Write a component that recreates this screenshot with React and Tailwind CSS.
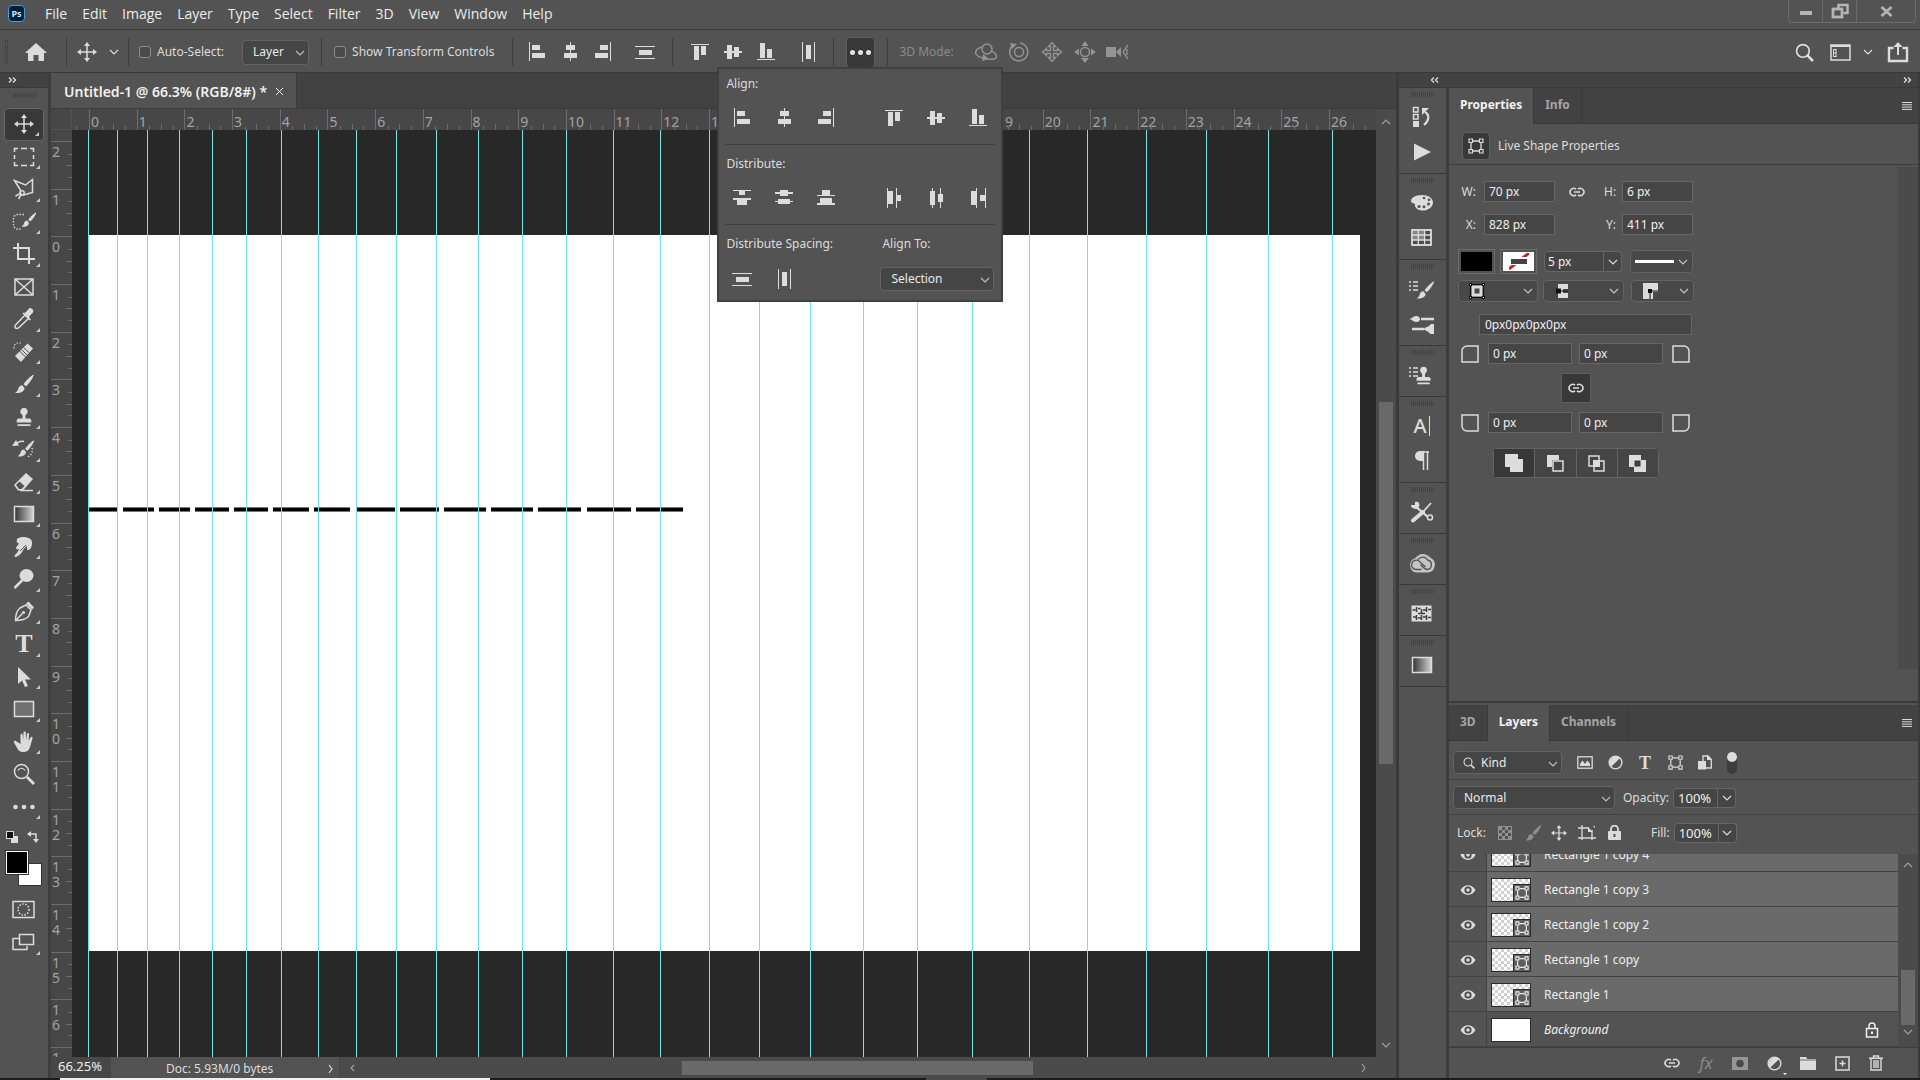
import React from "react";

/* ---------- icon helpers ---------- */

function Svg({ w = 24, h = w, vb, className = "", children }) {
  return (
    <svg
      width={w}
      height={h}
      viewBox={vb || `0 0 ${w} ${h}`}
      fill="none"
      stroke="currentColor"
      strokeWidth="1.5"
      className={"shrink-0 " + className}
      aria-hidden="true"
    >
      {children}
    </svg>
  );
}

function Blocks({ w = 20, h = 20, rects }) {
  return (
    <svg width={w} height={h} viewBox={`0 0 ${w} ${h}`} fill="currentColor" shapeRendering="crispEdges" className="shrink-0" aria-hidden="true">
      {rects.map(([x, y, rw, rh]) => (
        <rect key={`${x}-${y}-${rw}-${rh}`} x={x} y={y} width={rw} height={rh} />
      ))}
    </svg>
  );
}

const ALIGN = {
  left: [[2, 0, 1, 19], [5, 3, 8, 5], [5, 11, 13, 5]],
  hcenter: [[10, 0, 1, 19], [6, 3, 9, 5], [4, 11, 13, 5]],
  right: [[17, 0, 1, 19], [7, 3, 8, 5], [2, 11, 13, 5]],
  top: [[1, 2, 18, 1], [4, 4, 5, 14], [11, 4, 5, 9]],
  vmiddle: [[1, 9, 18, 2], [4, 3, 5, 14], [11, 5, 5, 10]],
  bottom: [[1, 17, 18, 1], [4, 1, 5, 15], [11, 7, 5, 9]],
};
const DIST = {
  top: [[1, 2, 18, 1], [7, 3, 6, 4], [1, 10, 18, 2], [5, 12, 10, 5]],
  vmiddle: [[1, 4, 18, 2], [6, 2, 8, 6], [1, 13, 18, 1], [4, 11, 12, 5]],
  bottom: [[6, 2, 8, 5], [1, 7, 18, 1], [4, 10, 12, 5], [1, 15, 18, 2]],
  left: [[3, 0, 1, 20], [4, 3, 5, 13], [12, 0, 1, 20], [13, 7, 4, 6]],
  hcenter: [[6, 0, 1, 20], [4, 3, 5, 14], [14, 0, 1, 20], [12, 6, 5, 8]],
  right: [[3, 3, 5, 14], [8, 0, 1, 20], [12, 7, 5, 6], [17, 0, 1, 20]],
};
const SPACE = {
  v: [[0, 4, 20, 1], [4, 8, 13, 5], [0, 16, 20, 1]],
  h: [[4, 0, 1, 20], [8, 3, 5, 14], [16, 0, 1, 20]],
};

const Chevron = ({ className = "" }) => (
  <Svg w={10} h={6} className={className}>
    <path d="M1 1l4 4 4-4" strokeWidth="1.2" />
  </Svg>
);

const Move = ({ size = 20 }) => (
  <Svg w={size} vb="0 0 20 20">
    <path d="M10 3v14M3 10h14" />
    <path d="M10 0l3 4H7zM10 20l3-4H7zM0 10l4-3v6zM20 10l-4-3v6z" fill="currentColor" stroke="none" />
  </Svg>
);

const Link = () => (
  <Svg w={18} h={10}>
    <path d="M8 2.2A3.6 3.6 0 1 0 8 7.8M10 2.2A3.6 3.6 0 1 1 10 7.8M6 5h6" strokeWidth="1.6" />
  </Svg>
);

const BrushShape = () => (
  <g fill="currentColor" stroke="none">
    <path d="M21.5 2.5c-4 2.6-7.6 6.2-10 9.6l2.4 2.3c3.3-2.8 6.3-7 8-11.3z" />
    <path d="M10.4 13.2c-2.3 0-3.6 1.3-4.1 3.3-.4 1.700-1.500 3.300-3.300 4.300 3.800.8 8.600-.1 9.700-4.200z" />
  </g>
);

const Brush = ({ size = 24 }) => (
  <Svg w={size} vb="0 0 24 24">
    <BrushShape />
  </Svg>
);

const StampShape = () => (
  <path d="M12 2a4 4 0 0 0-2.300 7.300c.7.600.9 1.700.6 4.200H6a2.500 2.500 0 0 0-2 2.500v2h16v-2a2.500 2.500 0 0 0-2-2.500h-4.300c-.3-2.500-.1-3.600.6-4.200A4 4 0 0 0 12 2zM5 20h14v1.800H5z" fill="currentColor" stroke="none" />
);

const Magnifier = ({ size = 18 }) => (
  <Svg w={size} vb="0 0 18 18">
    <circle cx="7.500" cy="7.500" r="6" strokeWidth="1.600" />
    <path d="M12 12l5 5" strokeWidth="2.500" />
  </Svg>
);

const ShapeBox = ({ size = 16 }) => (
  <Svg w={size} vb="0 0 16 16">
    <path d="M3 5v6M13 5v6M5 3h6M5 13h6" strokeWidth="1.300" />
    <path d="M1 1h3.500v3.500H1zM11.500 1H15v3.500h-3.500zM1 11.500h3.500V15H1zM11.500 11.500H15V15h-3.500z" strokeWidth="1.200" />
  </Svg>
);

const HalfCircle = () => (
  <Svg w={15} vb="0 0 16 16">
    <circle cx="8" cy="8" r="6.800" />
    <path d="M12.900 3.100A7 7 0 0 0 3.100 12.900z" fill="currentColor" stroke="none" />
  </Svg>
);

const Gradient = ({ id }) => (
  <Svg w={22} h={18}>
    <defs>
      <linearGradient id={id}>
        <stop offset="0" stopColor="#333" />
        <stop offset="1" stopColor="#d4d4d4" />
      </linearGradient>
    </defs>
    <rect x="1.500" y="1.500" width="19" height="15" fill={`url(#${id})`} />
  </Svg>
);

/* ---------- tool palette ---------- */

const TOOLS = [
  ["Move", <Move size={20} />],
  ["Rectangular Marquee", <Svg><path d="M2.500 7V3.500H6M9 3.500h6M18 3.500h3.500V7M21.500 10v4M21.500 17v3.500H18M15 20.500H9M6 20.500H2.500V17M2.500 14v-4" /></Svg>],
  ["Polygonal Lasso", <Svg><path d="M9 14L2.500 3.500l11 4.500 7-5.500v13L11.500 18M9.500 16l-6 3M9.500 17l-3 5" /><circle cx="10" cy="16" r="2.200" /></Svg>],
  ["Quick Selection", <Svg><g transform="translate(7 0) scale(.8)"><BrushShape /></g><path d="M12 4.500H5.500a4 4 0 0 0-4 4V15a4 4 0 0 0 4 4h3" strokeDasharray="1.500 1.500" strokeWidth="1.300" /></Svg>],
  ["Crop", <Svg><path d="M1 6h16v16M6 1v16h17" strokeWidth="2" /></Svg>],
  ["Frame", <Svg><path d="M3 4h18v16H3zM3 4l18 16M21 4L3 20" /></Svg>],
  ["Eyedropper", <Svg><path d="M13 8l3.500 3.500L7 20.500c-1 1-2.500 1-3.500.5s-.5-2.500.5-3.500z" /><path d="M12 6l2-1 3-3.500c1.500-1.500 5.500 1.500 4 4L17.500 9l-.5 3.500z" fill="currentColor" stroke="none" /><path d="M11 6l7.500 7" /></Svg>],
  ["Spot Healing Brush", <Svg><path d="M3 16L15.500 3.500l5.500 5L9 22z" fill="currentColor" stroke="none" /><path d="M7.500 11l6 6M11.500 7.500l6 5.500M9.500 9.500l6 6" stroke="#535353" strokeWidth="1" /><path d="M9 3H6a4 4 0 0 0-4 4v3" strokeDasharray="1.500 1.500" strokeWidth="1.200" /></Svg>],
  ["Brush", <Brush size={24} />],
  ["Clone Stamp", <Svg w={22} vb="0 0 24 24"><StampShape /></Svg>],
  ["History Brush", <Svg><g transform="translate(3 1) scale(.88)"><BrushShape /></g><path d="M3 8c3-3.500 6-4 9-3.500" /><path d="M0 9l4-6 3 5.500z" fill="currentColor" stroke="none" /><path d="M20 11c1 4-1 8-5 9" strokeDasharray="1.500 1.500" strokeWidth="1.200" /></Svg>],
  ["Eraser", <Svg><path d="M2 15L14 3l7 6L11 20.500H6z" fill="currentColor" stroke="none" /><path d="M4 15l3.500-3.500 5 4.500-3 3H7z" fill="#535353" stroke="none" /><path d="M8 20.500h13" /></Svg>],
  ["Gradient", <Gradient id="toolGradient" />],
  ["Smudge", <Svg><path d="M5 4c4-3 11-2.500 14 .5 2 3 1 7-1 10l-3 .5 0-4-3 2.500c-2 4-4.500 7.500-8 8.500-1.500.3-2-1-1-2 2-2 3.500-4 4-6-2 1-3 0-3-1.500l3-4C5.500 8 4 7 5 4z" fill="currentColor" stroke="none" /><path d="M14 10l-6 6" stroke="#535353" strokeWidth="1" /></Svg>],
  ["Dodge", <Svg><ellipse cx="14.500" cy="8.500" rx="7" ry="6.500" fill="currentColor" stroke="none" /><path d="M2.500 21L11 12.500" strokeWidth="2.500" /></Svg>],
  ["Pen", <Svg><path d="M3.500 20.500c0-5 1.500-10 4.500-12.500l6-3 5 5-2.500 6.500c-3 3-8 4-13 4zM4 20l6.500-6.500" /><circle cx="11.500" cy="12.500" r="1.600" fill="currentColor" stroke="none" /><path d="M14 3.500l2.500-2 5.500 6-2 2z" fill="currentColor" stroke="none" /></Svg>],
  ["Type", <span className="font-['Liberation_Serif',serif] text-[26px] leading-6 font-bold">T</span>],
  ["Path Selection", <Svg><path d="M6 2l13 12.500h-6l3 6.500-3 1-3-6.500-4 3.500z" fill="currentColor" stroke="none" /></Svg>],
  ["Rectangle", <Svg w={22} h={18}><rect x="1.500" y="1.500" width="19" height="15" fill="#717171" /></Svg>],
  ["Hand", <Svg><path d="M8.500 14V5c0-1.700 2-1.700 2.200 0l.5 5.500.300-8c0-1.500 2.200-1.500 2.300 0l.2 8 1-6.500c.2-1.500 2.200-1.300 2.100.2L16.600 11l1.900-3.500c.8-1.300 2.500-.4 2 1L18 17c-1 3.500-3 5-6.500 5-4 0-5.500-2-7-5L2 12.500c-.6-1.500 1.200-2.300 2.200-1.200z" fill="currentColor" stroke="none" /></Svg>],
  ["Zoom", <Svg><circle cx="9.500" cy="9.500" r="7" /><path d="M15 15l7 7" strokeWidth="2.800" /><path d="M6 8.500c1-2.500 5-3.500 7 0" strokeWidth="1.200" /></Svg>],
  ["Edit Toolbar", <Svg><g fill="currentColor" stroke="none"><circle cx="3.500" cy="12" r="2.300" /><circle cx="12" cy="12" r="2.300" /><circle cx="20.500" cy="12" r="2.300" /></g></Svg>],
];
const NO_FLYOUT = ["Frame", "Zoom"];

const Corner = () => (
  <span className="absolute right-1 bottom-1 size-0 border-b-4 border-l-4 border-b-[#c8c8c8] border-l-transparent" />
);

function Gripper() {
  return (
    <div className="flex h-[5px] justify-center gap-px">
      {Array.from({ length: 12 }, (_, i) => (
        <span key={i} className="w-px bg-[#424242]" />
      ))}
    </div>
  );
}

const DoubleArrow = ({ left }) => (
  <Svg w={9} h={6} className={left ? "rotate-180" : ""}>
    <path d="M1 .5L3.500 3 1 5.500M5 .5L7.500 3 5 5.500" strokeWidth="1.300" />
  </Svg>
);

function Toolbar() {
  return (
    <aside className="flex w-[51px] shrink-0 flex-col border-r-[3px] border-[#3d3d3d] bg-[#535353]">
      <div className="flex h-[15px] shrink-0 items-center border-b border-[#383838] bg-[#424242] pl-2">
        <DoubleArrow />
      </div>
      <div className="pt-[5px]"><Gripper /></div>
      <nav className="mt-2.5 grid h-[715px] auto-rows-fr px-1" aria-label="Tools">
        {TOOLS.map(([name, icon], i) => (
          <button
            key={name}
            type="button"
            aria-label={name}
            className={
              "relative flex w-10 items-center justify-center rounded-sm " +
              (i === 0 ? "border border-[#666] bg-[#383838]" : "")
            }
          >
            {icon}
            {!NO_FLYOUT.includes(name) && <Corner />}
          </button>
        ))}
      </nav>
      <div className="mt-2 flex justify-between pr-[9px] pl-1.5">
        <button type="button" aria-label="Default colors">
          <Svg w={12} h={12}><rect x="5" y="5" width="7" height="7" fill="currentColor" stroke="none" /><rect x=".5" y=".5" width="7" height="7" fill="#111" strokeWidth="1" /></Svg>
        </button>
        <button type="button" aria-label="Swap colors">
          <Svg w={12} h={12}><path d="M3 3h6v6" /><path d="M0 3l4-3v6zM9 12l-3-4h6z" fill="currentColor" stroke="none" /></Svg>
        </button>
      </div>
      <div className="mt-2 ml-1.5 grid w-9 grid-cols-[12px_10px_14px] grid-rows-[12px_11px_12px]">
        <button type="button" aria-label="Background color" className="col-span-2 col-start-2 row-span-2 row-start-2 border border-[#333] bg-white" />
        <button type="button" aria-label="Foreground color" className="col-span-2 col-start-1 row-span-2 row-start-1 border border-white bg-black outline outline-[#333]" />
      </div>
      <button type="button" aria-label="Quick mask" className="mt-3.5 ml-3">
        <Svg w={23} h={19}><rect x="1" y="1.500" width="21" height="16" /><circle cx="11.500" cy="9.500" r="5.500" strokeDasharray="1.500 1.500" /></Svg>
      </button>
      <button type="button" aria-label="Screen mode" className="relative mt-3.5 ml-3 w-8">
        <Svg w={23} h={18}><path d="M7 5.500H1v11h14V13" /><rect x="7.500" y="1.500" width="14" height="10" /></Svg>
        <span className="absolute right-1 -bottom-1 size-0 border-b-4 border-l-4 border-b-[#c8c8c8] border-l-transparent" />
      </button>
    </aside>
  );
}

/* ---------- top bars ---------- */

const MENUS = ["File", "Edit", "Image", "Layer", "Type", "Select", "Filter", "3D", "View", "Window", "Help"];

function MenuBar() {
  return (
    <header className="flex h-[30px] shrink-0 items-start justify-between border-b border-[#383838] bg-[#535353]">
      <div className="flex h-[27px] items-center pl-2">
        <span className="flex size-[17px] items-center justify-center rounded border border-[#31a8e0] bg-[#001e36] text-[9px] leading-none font-bold text-[#c9e8fb]">Ps</span>
        <nav className="ml-5 flex gap-[15px] font-['Open_Sans',sans-serif] text-sm text-[#ececec]" aria-label="Main menu">
          {MENUS.map((m) => (
            <button key={m} type="button">{m}</button>
          ))}
        </nav>
      </div>
      <div className="mr-1 flex h-[23px] rounded-b border border-t-0 border-[#6a6a6a] text-[#b4b4b4]">
        <button type="button" aria-label="Minimize" className="flex w-[34px] items-center justify-center border-r border-[#6a6a6a]">
          <span className="mt-1 h-1 w-3 bg-[#b4b4b4]" />
        </button>
        <button type="button" aria-label="Restore" className="flex w-[34px] items-center justify-center border-r border-[#6a6a6a]">
          <Svg w={18} h={16}><path d="M7.500 5V2h9v8h-4" strokeWidth="2.500" /><rect x="2" y="6" width="9" height="8" strokeWidth="2.800" fill="#535353" /></Svg>
        </button>
        <button type="button" aria-label="Close" className="flex w-[58px] items-center justify-center">
          <Svg w={13} h={11}><path d="M1.500 1l10 9M11.500 1l-10 9" strokeWidth="2.800" /></Svg>
        </button>
      </div>
    </header>
  );
}

const Sep = ({ className = "" }) => <span className={"h-7 w-px shrink-0 bg-[#3d3d3d] " + className} />;

const IconButton = ({ label, className = "w-[33px]", children }) => (
  <button type="button" aria-label={label} className={"flex shrink-0 items-center justify-center " + className}>
    {children}
  </button>
);

function Check({ label, className }) {
  return (
    <label className={"flex shrink-0 items-center gap-1.5 whitespace-nowrap " + className}>
      <input type="checkbox" className="size-3 appearance-none rounded-[3px] border border-[#8c8c8c] bg-[#4a4a4a]" />
      {label}
    </label>
  );
}

function Dropdown({ label, value, className, pad = "pl-2.5" }) {
  return (
    <div className={"relative shrink-0 " + className}>
      <select
        aria-label={label}
        defaultValue={value}
        className={"size-full appearance-none rounded-sm border border-[#636363] bg-[#454545] text-[#eaeaea] " + pad}
      >
        <option>{value}</option>
      </select>
      <Chevron className="pointer-events-none absolute top-1/2 right-1 -mt-0.5 text-[#bdbdbd]" />
    </div>
  );
}

function OptionsBar() {
  return (
    <section className="flex h-[43px] shrink-0 items-center border-b border-[#3a3a3a] bg-[#535353] pt-0.5" aria-label="Options">
      <span className="ml-[5px] h-6 w-[3px] border-x border-dotted border-[#3a3a3a]" />
      <IconButton label="Home" className="mr-[3px] w-[55px]">
        <Svg w={22} h={20}><path d="M11 1L0 11h3v8h5.500v-6h5v6H19v-8h3z" fill="currentColor" stroke="none" /></Svg>
      </IconButton>
      <Sep />
      <IconButton label="Move tool" className="w-10"><Move size={20} /></IconButton>
      <IconButton label="Tool presets" className="w-3.5"><Chevron /></IconButton>
      <Sep className="ml-[7px]" />
      <Check label="Auto-Select:" className="ml-2.5" />
      <Dropdown label="Auto-select target" value="Layer" className="ml-[18px] h-[25px] w-[67px]" />
      <Sep className="ml-3" />
      <Check label="Show Transform Controls" className="ml-3 pr-[18px]" />
      <Sep className="mr-[7px]" />
      <IconButton label="Align left edges"><Blocks rects={ALIGN.left} /></IconButton>
      <IconButton label="Align horizontal centers"><Blocks rects={ALIGN.hcenter} /></IconButton>
      <IconButton label="Align right edges"><Blocks rects={ALIGN.right} /></IconButton>
      <IconButton label="Distribute vertically" className="mx-[9px] w-[33px]"><Blocks rects={SPACE.v} /></IconButton>
      <Sep className="mr-2.5 ml-0.5" />
      <IconButton label="Align top edges"><Blocks rects={ALIGN.top} /></IconButton>
      <IconButton label="Align vertical centers"><Blocks rects={ALIGN.vmiddle} /></IconButton>
      <IconButton label="Align bottom edges"><Blocks rects={ALIGN.bottom} /></IconButton>
      <IconButton label="Distribute horizontally" className="mx-[9px] w-[33px]"><Blocks rects={SPACE.h} /></IconButton>
      <Sep />
      <div className="relative mx-3 shrink-0">
        <button type="button" aria-label="Align and distribute" className="flex h-[31px] w-[29px] items-center justify-center gap-[3px] rounded-sm border border-[#5c5c5c] bg-[#383838]">
          <span className="size-[5px] rounded-full bg-[#e4e4e4]" />
          <span className="size-[5px] rounded-full bg-[#e4e4e4]" />
          <span className="size-[5px] rounded-full bg-[#e4e4e4]" />
        </button>
        <AlignPopup />
      </div>
      <Sep />
      <span className="mr-4 ml-[11px] shrink-0 text-[#8b8b8b]">3D Mode:</span>
      <div className="flex shrink-0 text-[#949494]">
        <IconButton label="Orbit">
          <Svg w={24} h={20}><circle cx="13" cy="7" r="5" /><path d="M8 5C3 6 1 9 2 12c2 4 17 7 20 4 1-2-1-5-4-7" /><path d="M9 12l-1 7 7-2z" fill="currentColor" stroke="none" /></Svg>
        </IconButton>
        <IconButton label="Roll">
          <Svg w={22} h={20}><circle cx="11" cy="10" r="4.500" /><path d="M5 3a9 9 0 1 0 7-2" /><path d="M2 1l7 1-5 5z" fill="currentColor" stroke="none" /></Svg>
        </IconButton>
        <IconButton label="Pan">
          <Svg w={22} h={22}><path d="M11 1.500l3.500 4h-2v4h4v-2l4 3.500-4 3.500v-2h-4v4h2L11 20.500l-3.500-4h2v-4h-4v2L1.500 11l4-3.500v2h4v-4h-2z" strokeWidth="1.400" /></Svg>
        </IconButton>
        <IconButton label="Slide" className="w-8">
          <Svg w={22} h={22}><circle cx="11" cy="11" r="4.500" /><path d="M11 0l3.500 5h-7zM11 22l4-5H7zM0 11l5-3.500v7zM22 11l-5-3.500v7z" fill="currentColor" stroke="none" /></Svg>
        </IconButton>
        <IconButton label="3D camera">
          <Svg w={24} h={16}><path d="M1 3h10v10H1zM11 8l5-5v10z" fill="currentColor" stroke="none" /><path d="M23 1l-5 7 5 7M22 5v6" strokeWidth="1.300" /></Svg>
        </IconButton>
      </div>
      <div className="mr-1.5 ml-auto flex shrink-0 items-center">
        <IconButton label="Search" className="mr-[3px] w-[33px]"><Magnifier size={19} /></IconButton>
        <IconButton label="Workspace">
          <Svg w={21} h={17}><rect x="1" y="1" width="19" height="15" /><path d="M1 2h19" strokeWidth="2" /><path d="M3.500 5v8M6 5v8M3 5.500h3.500M3 9h3.500M3 12.500h3.500" strokeWidth="1" /></Svg>
        </IconButton>
        <IconButton label="Workspace menu" className="mr-[5px] ml-[3px] w-4"><Chevron /></IconButton>
        <IconButton label="Share">
          <Svg w={22} h={21}><path d="M6.500 6H2v13h18V6h-4.500" strokeWidth="2.400" /><path d="M11 13V3" strokeWidth="2" /><path d="M6.500 5L11 0l4.500 5z" fill="currentColor" stroke="none" /></Svg>
        </IconButton>
      </div>
    </section>
  );
}

function PopupRow({ labels, icons }) {
  return (
    <div className="-ml-1 grid grid-cols-[42px_42px_42px_26px_42px_42px_42px]">
      {icons.map((rects, i) => (
        <button key={labels[i]} type="button" aria-label={labels[i]} className={"flex h-6 items-center justify-center " + (i === 3 ? "col-start-5" : "")}>
          <Blocks rects={rects} />
        </button>
      ))}
    </div>
  );
}

function AlignPopup() {
  return (
    <div className="absolute top-[30px] right-[-128px] z-10 w-[286px] border-2 border-[#404040] bg-[#535353] px-[7px] pt-[7px] pb-[9px]">
      <h2 className="leading-4">Align:</h2>
      <div className="-mx-px mt-3.5 border-b border-[#3d3d3d] pb-3.5">
        <PopupRow labels={["Left edges", "Horizontal centers", "Right edges", "Top edges", "Vertical centers", "Bottom edges"]} icons={[ALIGN.left, ALIGN.hcenter, ALIGN.right, ALIGN.top, ALIGN.vmiddle, ALIGN.bottom]} />
      </div>
      <h2 className="mt-[11px] leading-4">Distribute:</h2>
      <div className="-mx-px mt-3.5 border-b border-[#3d3d3d] pb-3.5">
        <PopupRow labels={["Distribute top", "Distribute middles", "Distribute bottom", "Distribute left", "Distribute centers", "Distribute right"]} icons={[DIST.top, DIST.vmiddle, DIST.bottom, DIST.left, DIST.hcenter, DIST.right]} />
      </div>
      <div className="mt-[11px] grid grid-cols-[154px_1fr] leading-4">
        <h2>Distribute Spacing:</h2>
        <h2 className="px-0.5">Align To:</h2>
        <div className="mt-[15px] -ml-[5px] flex">
          <IconButton label="Space vertically" className="w-[42px]"><Blocks rects={SPACE.v} /></IconButton>
          <IconButton label="Space horizontally" className="w-[42px]"><Blocks rects={SPACE.h} /></IconButton>
        </div>
        <Dropdown label="Align to" value="Selection" className="mt-[15px] h-6" />
      </div>
    </div>
  );
}

/* ---------- document window ---------- */

const INCH = 47.7;

function HorizontalRuler() {
  return (
    <div className="flex h-[21px] shrink-0 bg-[#474747] text-sm leading-none text-[#a3a3a3]">
      <div className="w-[21px] shrink-0 border-r border-b border-dotted border-[#5e5e5e]" />
      <div className="flex w-0 flex-1 overflow-hidden">
        <div className="flex w-[17px] shrink-0 items-end pl-1"><i className="h-1 w-px bg-[#6c6c6c]" /></div>
        {Array.from({ length: 27 }, (_, n) => (
          <div key={n} className="grid shrink-0 grid-cols-4 grid-rows-1 items-end border-l border-[#6c6c6c]" style={{ width: INCH }}>
            <span className="col-start-1 row-start-1 self-center pt-1 pl-px">{n}</span>
            <i className="col-start-2 row-start-1 h-1 w-px bg-[#6c6c6c]" />
            <i className="col-start-3 row-start-1 h-1.5 w-px bg-[#6c6c6c]" />
            <i className="col-start-4 row-start-1 h-1 w-px bg-[#6c6c6c]" />
          </div>
        ))}
      </div>
    </div>
  );
}

function VerticalRuler() {
  const labels = [2, 1, ...Array.from({ length: 18 }, (_, n) => n)];
  return (
    <div className="w-[21px] shrink-0 overflow-hidden bg-[#474747] pt-[11px] text-sm leading-[15px] text-[#a3a3a3]">
      {labels.map((n, i) => (
        <div key={i} className="grid grid-cols-1 grid-rows-4 border-t border-[#6c6c6c]" style={{ height: INCH }}>
          <span className="col-start-1 row-span-4 row-start-1 flex flex-col pt-0.5 pl-px">
            {String(n).split("").map((d, k) => <span key={k}>{d}</span>)}
          </span>
          <i className="col-start-1 row-start-2 h-px w-1 justify-self-end bg-[#6c6c6c]" />
          <i className="col-start-1 row-start-3 h-px w-1.5 justify-self-end bg-[#6c6c6c]" />
          <i className="col-start-1 row-start-4 h-px w-1 justify-self-end bg-[#6c6c6c]" />
        </div>
      ))}
    </div>
  );
}

const GUIDES = [16, 45, 75, 107, 140, 174, 209, 246, 284, 324, 364, 406, 450, 494, 541, 588, 637, 687, 738, 791, 845, 900, 957, 1015, 1074, 1134, 1196, 1260];
const DASHES = [[17, 28], [51, 31], [87, 31], [123, 34], [162, 34], [201, 36], [242, 36], [285, 38], [328, 39], [372, 42], [419, 42], [466, 43], [515, 44], [564, 47]];

function Canvas() {
  return (
    <main className="relative flex-1 overflow-hidden bg-[#282828]" aria-label="Canvas">
      <div className="absolute top-[105px] left-[17px] h-[716px] w-[1271px] bg-white" />
      {DASHES.map(([x, w]) => (
        <span key={x} className="absolute top-[377px] h-[5px] border-y border-[#777] bg-black" style={{ left: x, width: w }} />
      ))}
      {GUIDES.map((x) => (
        <span key={x} className="absolute inset-y-0 w-px bg-[#6fe6e6]" style={{ left: x }} />
      ))}
    </main>
  );
}

function DocumentArea() {
  return (
    <div className="flex min-w-0 flex-1 flex-col">
      <div className="flex h-9 shrink-0 border-b border-[#3a3a3a] bg-[#424242]">
        <div className="flex items-center gap-2 border-r border-[#3a3a3a] bg-[#535353] pt-0.5 pr-3 pl-[13px] text-sm font-semibold text-[#f0f0f0]">
          Untitled-1 @ 66.3% (RGB/8#) *
          <button type="button" aria-label="Close document"><Svg w={9} h={9}><path d="M1 1l7 7M8 1L1 8" strokeWidth="1" /></Svg></button>
        </div>
      </div>
      <div className="flex min-h-0 flex-1">
        <div className="flex min-w-0 flex-1 flex-col">
          <HorizontalRuler />
          <div className="flex min-h-0 flex-1">
            <VerticalRuler />
            <Canvas />
          </div>
          <div className="flex h-[21px] shrink-0 items-stretch bg-[#4b4b4b]">
            <label className="flex w-[60px] bg-[#474747]">
              <input aria-label="Zoom level" defaultValue="66.25%" className="w-full pb-0.5 pl-[7px] text-[13px] text-[#efefef]" />
            </label>
            <div className="flex w-[229px] items-center justify-between border-r border-[#454545] bg-[#535353] pt-0.5 pr-1.5 pl-[55px]">
              <span>Doc: 5.93M/0 bytes</span>
              <button type="button" aria-label="Status menu"><Svg w={5} h={10}><path d="M1 1l3 4-3 4" strokeWidth="1.200" /></Svg></button>
            </div>
            <div className="flex flex-1 items-center px-2.5 text-[#a0a0a0]">
              <Svg w={5} h={8}><path d="M4 1L1 4l3 3" strokeWidth="1.200" /></Svg>
              <div className="flex flex-1 pr-6 pl-8">
                <div className="ml-[31%] h-3.5 w-[37%] bg-[#6a6a6a]" />
              </div>
              <Svg w={5} h={10}><path d="M1 1l3 4-3 4" strokeWidth="1.200" /></Svg>
            </div>
          </div>
        </div>
        <div className="flex w-5 shrink-0 flex-col items-center bg-[#4b4b4b] pt-2.5 pb-[30px] text-[#a0a0a0]">
          <Chevron className="rotate-180" />
          <div className="flex w-3.5 flex-1 flex-col pt-[277px]">
            <div className="h-[362px] bg-[#6a6a6a]" />
          </div>
          <Chevron />
        </div>
      </div>
    </div>
  );
}

/* ---------- dock of collapsed panels ---------- */

const ListLines = () => <path d="M0 4h2M4 4h5M0 8h2M4 8h5M0 12h2M4 12h5" strokeWidth="1.500" />;

const DOCK = [
  [
    ["History", <Svg w={20} h={22}><rect x="1.500" y="1.500" width="4.500" height="4.500" /><rect x="1.500" y="8.500" width="4.500" height="4.500" /><rect x="1" y="15" width="6" height="6" fill="currentColor" stroke="none" /><path d="M13 6c5 3 4 9-1 13" strokeWidth="2.200" /><path d="M10 9V2h7z" fill="currentColor" stroke="none" /></Svg>],
    ["Actions", <Svg w={18} h={18}><path d="M1 .5L18 9 1 17.500z" fill="currentColor" stroke="none" /></Svg>],
  ],
  [
    ["Color", <Svg w={24} h={18}><path d="M12 1C5 1 1 4 1 7c0 2 3 2 4 3-1 4 4 7 9 6.500 5-.5 9-4 9-8C23 4 18 1 12 1z" fill="currentColor" stroke="none" /><g fill="#535353" stroke="none"><circle cx="9" cy="12.500" r="1.600" /><circle cx="14" cy="12.800" r="1.500" /><circle cx="18.500" cy="10" r="1.500" /><circle cx="19" cy="5.800" r="1.400" /><circle cx="14" cy="4" r="1.300" /></g></Svg>],
    ["Swatches", <Svg w={21} h={17}><rect x="1" y="1" width="19" height="15" fill="#4b4b4b" /><path d="M1 1h13v10H1z" fill="#858585" stroke="none" /><path d="M7.300 1v15M13.600 1v15M1 6h19M1 11h19M1 1h19v15H1z" strokeWidth="1.300" /></Svg>],
  ],
  [
    ["Brush Settings", <Svg w={26} h={22}><ListLines /><g transform="translate(5 1) scale(.92)"><BrushShape /></g></Svg>],
    ["Brushes", <Svg w={26} h={20}><path d="M12 5h13M3 15h12" strokeWidth="2.400" /><path d="M0 5c3 0 4-3 7-3 3 0 4 2 4 3s-1 3-4 3C4 8 3 5 0 5zM15 15c0-2 4-1 7-5h3v11h-3c-3-5-7-4-7-6z" fill="currentColor" stroke="none" /></Svg>],
  ],
  [["Clone Source", <Svg w={26} h={22}><ListLines /><g transform="translate(4 1) scale(.88)"><StampShape /></g></Svg>]],
  [
    ["Character", <span className="flex items-center gap-0.5 text-xl leading-5 font-medium">A<i className="h-5 w-px bg-[#dcdcdc]" /></span>],
    ["Paragraph", <Svg w={16} h={19}><path d="M9 0H6a5 5 0 0 0 0 10h3z" fill="currentColor" stroke="none" /><path d="M9.500 0v19M13.500 0v19M8 1h7" strokeWidth="1.500" /></Svg>],
  ],
  [["Tool Presets", <Svg w={24} h={22}><path d="M3 19.500L13 11" strokeWidth="4" strokeLinecap="round" /><path d="M12 12l9-10" strokeWidth="1.800" /><path d="M5 5l13 11" strokeWidth="2.200" /><circle cx="20" cy="16.500" r="2.500" /><path d="M1 4l4 0V1c4-1 5 2 4 5L7 8C4 8 1 7 1 4z" fill="currentColor" stroke="none" /></Svg>]],
  [["Libraries", <Svg w={27} h={20} className="text-[#c4c4c4]"><path d="M8 19.500A7.500 7.500 0 0 1 7.500 5 9 9 0 0 1 22 4.500a7.800 7.800 0 0 1-2.500 15z" fill="currentColor" stroke="none" /><path d="M13.500 16.500H8.500a4.700 4.700 0 1 1 2.500-8.500l6.500 6M10 6.500c3-3.500 8-3 9.500.5a4.800 4.800 0 0 1-.5 9.500c-2.500 0-4-2.500-6.500-5" stroke="#535353" strokeWidth="1.300" /></Svg>]],
  [["Patterns", <Svg w={21} h={17}><rect x=".5" y=".5" width="20" height="16" fill="currentColor" stroke="none" /><path d="M5.500 2v5M10.500 4v4M15.500 2v5M1.500 5h3M7 3.500h2.500M12 5h3M17 4.500h3M5.500 10v5M10.500 10v5M15.500 10v5M2 12h3M7 8.500h7M7 13h3M12 12h3M17 12.500h3" stroke="#3d3d3d" strokeWidth="1.500" /></Svg>]],
  [["Gradients", <Gradient id="dockGradient" />]],
];

function Dock() {
  return (
    <aside className="flex w-[50px] shrink-0 flex-col border-r-[3px] border-[#3d3d3d] bg-[#535353]">
      {DOCK.map((group, i) => (
        <div key={i} className="border-b border-[#3a3a3a] pt-1 pb-1">
          <Gripper />
          <div className="mt-0.5">
            {group.map(([name, icon]) => (
              <button key={name} type="button" aria-label={name} className="flex h-[35px] w-full items-center justify-center pr-0.5">
                {icon}
              </button>
            ))}
          </div>
        </div>
      ))}
    </aside>
  );
}

/* ---------- right panels ---------- */

function Tabs({ tabs, active }) {
  return (
    <div className="flex h-9 shrink-0 items-stretch bg-[#424242]" role="tablist">
      {tabs.map((t) => (
        <button
          key={t}
          type="button"
          role="tab"
          aria-selected={t === active}
          className={
            "border-r border-[#3a3a3a] px-[11px] pb-0.5 font-bold " +
            (t === active ? "bg-[#535353] text-[#f2f2f2]" : "border-b text-[#a6a6a6]")
          }
        >
          {t}
        </button>
      ))}
      <div className="flex flex-1 items-center justify-end border-b border-[#3a3a3a] pr-1.5">
        <button type="button" aria-label="Panel menu">
          <Svg w={10} h={8}><path d="M0 .5h10M0 2.800h10M0 5.100h10M0 7.400h10" strokeWidth="1" /></Svg>
        </button>
      </div>
    </div>
  );
}

function Field({ label, id, value, labelClass, className = "w-[71px]" }) {
  return (
    <>
      {labelClass && <label htmlFor={id} className={"text-right " + labelClass}>{label}</label>}
      <input
        id={id}
        aria-label={label}
        defaultValue={value}
        className={"h-[21px] border border-[#666] bg-[#454545] pl-1 text-[#efefef] " + className}
      />
    </>
  );
}

function CornerIcon({ d }) {
  return <Svg w={18} h={18}><path d={d} /></Svg>;
}

function IconSelect({ label, className, icon }) {
  return (
    <div className={"relative flex items-center rounded-sm border border-[#636363] bg-[#484848] " + className}>
      <select aria-label={label} className="absolute inset-0 appearance-none opacity-0"><option>{label}</option></select>
      {icon}
      <Chevron className="mr-1 ml-auto text-[#c4c4c4]" />
    </div>
  );
}

const BOOLEANS = [
  ["Combine shapes", <Svg w={18} h={18}><path d="M0 0h13v5h5v13H5v-5H0z" fill="currentColor" stroke="none" /></Svg>],
  ["Subtract front shape", <Svg w={17} h={17}><path d="M0 0h12v5H5v7H0z" fill="currentColor" stroke="none" /><rect x="6" y="6" width="10" height="10" /></Svg>],
  ["Intersect shapes", <Svg w={17} h={17}><rect x="1" y="1" width="10" height="10" /><rect x="6" y="6" width="10" height="10" /><path d="M5 5h7v7H5z" fill="currentColor" stroke="none" /></Svg>],
  ["Exclude overlapping", <Svg w={17} h={17}><path d="M0 0h12v5h5v12H5v-5H0z" fill="currentColor" stroke="none" /><path d="M5.500 5.500h6v6h-6z" fill="#3f3f3f" stroke="none" /></Svg>],
];

function Properties() {
  return (
    <section className="flex min-h-0 flex-1 flex-col border-b-2 border-[#3a3a3a]" aria-label="Properties panel">
      <Tabs tabs={["Properties", "Info"]} active="Properties" />
      <div className="flex h-[41px] shrink-0 items-center gap-2 border-b border-[#3d3d3d] pt-[3px] pl-[13px]">
        <span className="flex size-7 items-center justify-center rounded-sm border border-[#606060] bg-[#383838]"><ShapeBox /></span>
        Live Shape Properties
      </div>
      <div className="flex min-h-0 flex-1">
        <div className="w-[260px] pt-4 pl-[9px]">
          <div className="flex items-center">
            <Field id="w" label="W:" value="70 px" labelClass="w-[18px] mr-2" />
            <IconButton label="Link width and height" className="mr-[5px] w-11"><Link /></IconButton>
            <Field id="h" label="H:" value="6 px" labelClass="w-3 mr-1.5" />
          </div>
          <div className="mt-3 flex items-center">
            <Field id="x" label="X:" value="828 px" labelClass="w-[18px] mr-2" />
            <span className="w-[49px]" />
            <Field id="y" label="Y:" value="411 px" labelClass="w-3 mr-1.5" />
          </div>
          <div className="mt-3.5 flex h-[25px] items-center">
            <button type="button" aria-label="Fill" className="h-[25px] w-[37px] border border-[#6b6b6b] p-0.5"><span className="block h-full bg-black" /></button>
            <button type="button" aria-label="Stroke" className="ml-[5px] h-[25px] w-[37px] border border-[#6b6b6b] p-0.5">
              <span className="flex h-full items-center justify-center bg-white">
                <Svg w={20} h={17}><path d="M0 16l20-16" stroke="#c62828" strokeWidth="3" /><rect x="0" y="4" width="20" height="8" fill="#fff" stroke="none" /><rect x="2" y="6" width="16" height="5" fill="#444" stroke="none" /></Svg>
              </span>
            </button>
            <input aria-label="Stroke width" defaultValue="5 px" className="ml-[7px] h-[21px] w-[60px] rounded-l-sm border border-[#666] bg-[#454545] pl-[3px] text-[#efefef]" />
            <button type="button" aria-label="Stroke width presets" className="flex h-[21px] w-[18px] items-center justify-center rounded-r-sm border border-l-0 border-[#666] bg-[#454545]"><Chevron /></button>
            <IconSelect label="Stroke style" className="ml-2 h-[23px] w-[63px] pl-1" icon={<span className="h-[3px] w-[39px] bg-white" />} />
          </div>
          <div className="mt-1.5 flex">
            <IconSelect label="Stroke alignment" className="h-[22px] w-20 pl-2.5" icon={<Svg w={16} h={16}><rect x="4" y="4" width="8" height="8" strokeWidth="3" /><path d="M1.500 1.500h13v13h-13z" stroke="#111" strokeWidth="1.200" /><path d="M0 0h3v3H0zM13 0h3v3h-3zM0 13h3v3H0zM13 13h3v3h-3z" stroke="none" fill="#111" /><path d="M1 1h1v1H1zM14 1h1v1h-1zM1 14h1v1H1zM14 14h1v1h-1z" stroke="none" fill="#fff" /></Svg>} />
            <IconSelect label="Stroke caps" className="ml-[5px] h-[22px] w-[81px] pl-3" icon={<Svg w={12} h={16}><path d="M2 1h10v5H7v4h5v5H2z" fill="currentColor" stroke="none" /><path d="M0 5.500h5v5H0z" fill="#111" stroke="none" /><path d="M5 8h7" stroke="#111" strokeWidth="1" /></Svg>} />
            <IconSelect label="Stroke corners" className="ml-[7px] h-[22px] w-[63px] pl-2.5" icon={<Svg w={17} h={16}><path d="M1 0h15v9h-5v7H1z" fill="currentColor" stroke="none" /><path d="M6 6h4v4H6z" fill="#111" stroke="none" /><path d="M8 8h8M8 8v8" stroke="#111" strokeWidth="1" /></Svg>} />
          </div>
          <input aria-label="Corner radii" defaultValue="0px0px0px0px" className="mt-3 ml-[21px] h-[21px] w-[213px] border border-[#666] bg-[#454545] pl-[5px] text-[#efefef]" />
          <div className="mt-2 grid w-[235px] grid-cols-[18px_84px_84px_18px] items-center gap-x-[7px] gap-y-[9px] pl-[3px]">
            <CornerIcon d="M1 17V6a5 5 0 0 1 5-5h11v16z" />
            <Field id="tl" label="Top left radius" value="0 px" className="ml-0.5 w-full" />
            <Field id="tr" label="Top right radius" value="0 px" className="ml-0.5 w-full" />
            <span className="pl-1"><CornerIcon d="M1 17V1h11a5 5 0 0 1 5 5v11z" /></span>
            <button type="button" aria-label="Link radii" className="col-span-4 ml-[100px] flex h-[30px] w-[30px] items-center justify-center border border-[#5e5e5e] bg-[#383838]"><Link /></button>
            <CornerIcon d="M1 1h16v16H6a5 5 0 0 1-5-5z" />
            <Field id="bl" label="Bottom left radius" value="0 px" className="ml-0.5 w-full" />
            <Field id="br" label="Bottom right radius" value="0 px" className="ml-0.5 w-full" />
            <span className="pl-1"><CornerIcon d="M1 1h16v11a5 5 0 0 1-5 5H1z" /></span>
          </div>
          <div className="mt-[15px] ml-[35px] flex w-[166px] divide-x divide-[#636363] rounded-sm border border-[#636363]">
            {BOOLEANS.map(([name, icon], i) => (
              <button key={name} type="button" aria-label={name} className={"flex h-7 flex-1 items-center justify-center " + (i === 0 ? "bg-[#383838]" : "bg-[#454545]")}>
                {icon}
              </button>
            ))}
          </div>
        </div>
        <div className="mt-0.5 mb-8 ml-auto w-5 bg-[#4b4b4b]" />
      </div>
    </section>
  );
}

const Eye = () => (
  <Svg w={16} h={12}>
    <path d="M.5 6C4-.5 12-.5 15.500 6 12 12.500 4 12.500.5 6z" fill="currentColor" stroke="none" />
    <circle cx="8" cy="6" r="3.600" fill="#4a4a4a" stroke="none" />
    <circle cx="8" cy="6" r="1.800" fill="currentColor" stroke="none" />
  </Svg>
);

const CHECKER = "bg-white bg-[repeating-conic-gradient(#d0d0d0_0_25%,#fff_0_50%)] bg-[size:6px_6px]";

const LAYERS = ["Rectangle 1 copy 4", "Rectangle 1 copy 3", "Rectangle 1 copy 2", "Rectangle 1 copy", "Rectangle 1"];

function LayerRow({ name, background }) {
  return (
    <li className="flex h-[35px] shrink-0 border-b border-[#434343]">
      <button type="button" aria-label={"Toggle " + name} className="flex w-[38px] items-center justify-center border-r border-[#434343] pt-px"><Eye /></button>
      <div className={"flex flex-1 items-center pt-px pl-1 text-[#efefef] " + (background ? "" : "bg-[#6a6a6a]")}>
        <span className={"flex h-6 w-10 items-end justify-end border border-[#2b2b2b] " + (background ? "bg-white" : CHECKER)}>
          {!background && (
            <span className="flex size-[17px] items-center justify-center border-t border-l border-[#2b2b2b] bg-[#5e5e5e]"><ShapeBox size={14} /></span>
          )}
        </span>
        <span className={"ml-[13px] " + (background ? "italic" : "")}>{name}</span>
        {background && (
          <Svg w={14} h={16} className="mr-[19px] ml-auto"><rect x="1.500" y="6.500" width="11" height="8.500" /><path d="M4 6V4a3 3 0 0 1 6 0v2" /><rect x="6" y="9.500" width="2" height="2.500" fill="currentColor" stroke="none" /></Svg>
        )}
      </div>
    </li>
  );
}

function Percent({ id, label }) {
  return (
    <div className="flex items-center gap-1">
      <label htmlFor={id}>{label}</label>
      <span className="flex">
        <input id={id} defaultValue="100%" className="h-5 w-[45px] rounded-l-sm border border-[#666] bg-[#454545] pl-1 text-[13px] text-[#efefef]" />
        <button type="button" aria-label={label + " slider"} className="flex h-5 w-[18px] items-center justify-center rounded-r-sm border border-l-0 border-[#666] bg-[#454545]"><Chevron /></button>
      </span>
    </div>
  );
}

const SerifT = () => <span className="font-['Liberation_Serif',serif] text-lg leading-4 font-bold">T</span>;

function Layers() {
  return (
    <section className="flex flex-col pt-0.5" aria-label="Layers panel">
      <Tabs tabs={["3D", "Layers", "Channels"]} active="Layers" />
      <div className="flex h-[39px] shrink-0 items-center border-b border-[#434343] pt-[5px] pl-1">
        <div className="relative">
          <Dropdown label="Filter kind" value="Kind" className="h-[23px] w-[109px]" pad="pl-[27px]" />
          <span className="pointer-events-none absolute top-1.5 left-2.5"><Magnifier size={12} /></span>
        </div>
        <div className="ml-2 flex">
          <IconButton label="Pixel layers" className="w-[30px]"><Svg w={16} h={13}><rect x=".8" y=".8" width="14.400" height="11.400" strokeWidth="1.300" /><path d="M3 10V8l2.500-3.500L8 8l2.500-3.500L13 8v2z" fill="currentColor" stroke="none" /></Svg></IconButton>
          <IconButton label="Adjustment layers" className="w-[30px]"><HalfCircle /></IconButton>
          <IconButton label="Type layers" className="w-[30px]"><SerifT /></IconButton>
          <IconButton label="Shape layers" className="w-[30px]"><ShapeBox size={15} /></IconButton>
          <IconButton label="Smart objects" className="w-[30px]"><Svg w={14} h={15}><path d="M5 7V1h5l3.300 3.500V13H8" strokeWidth="1.300" /><path d="M0 6h8v8.500H0zM9 0l5 5H9z" fill="currentColor" stroke="none" /></Svg></IconButton>
        </div>
        <button type="button" aria-label="Filter toggle" className="ml-[7px] flex h-[22px] w-2.5 items-start justify-center rounded-full bg-[#3d3d3d]"><span className="size-2.5 shrink-0 rounded-full bg-[#dcdcdc]" /></button>
      </div>
      <div className="flex h-[35px] shrink-0 items-center gap-2 border-b border-[#434343] pt-px pl-1">
        <Dropdown label="Blend mode" value="Normal" className="h-[23px] w-[162px]" />
        <Percent id="opacity" label="Opacity:" />
      </div>
      <div className="flex h-[39px] shrink-0 items-center pb-1 pl-2">
        <span>Lock:</span>
        <div className="ml-[5px] flex">
          <IconButton label="Lock transparent pixels" className="w-7 text-[#909090]"><Svg w={14} h={14}><path d="M0 0h14v14H0z" fill="currentColor" stroke="none" /><path d="M1 4h3v3H1zM7 4h3v3H7zM4 1h3v3H4zM10 1h3v3h-3zM4 7h3v3H4zM10 7h3v3h-3zM1 10h3v3H1zM7 10h3v3H7z" fill="#535353" stroke="none" /></Svg></IconButton>
          <IconButton label="Lock image pixels" className="w-7 text-[#909090]"><Brush size={20} /></IconButton>
          <IconButton label="Lock position" className="w-6"><Move size={16} /></IconButton>
          <IconButton label="Lock artboard nesting" className="w-8"><Svg w={18} h={15}><path d="M4 0v15M0 3h11M0 13h18M14 5v10" strokeWidth="1.300" /><path d="M10 2l5 5h-5zM15 1l2 0v2z" fill="currentColor" stroke="none" /></Svg></IconButton>
          <IconButton label="Lock all" className="w-6"><Svg w={13} h={15}><rect y="6" width="13" height="9" rx="1" fill="currentColor" stroke="none" /><path d="M3 7V4a3.500 3.500 0 0 1 7 0v3" strokeWidth="1.800" /><rect x="5.500" y="9" width="2" height="3" fill="#535353" stroke="none" /></Svg></IconButton>
        </div>
        <div className="ml-6"><Percent id="fill" label="Fill:" /></div>
      </div>
      <div className="flex h-[194px] shrink-0 border-b border-[#3d3d3d]">
        <ul className="flex flex-1 flex-col justify-end overflow-hidden">
          {LAYERS.map((name) => <LayerRow key={name} name={name} />)}
          <LayerRow name="Background" background />
        </ul>
        <div className="flex w-5 shrink-0 flex-col items-center bg-[#4b4b4b] pt-2 pb-3 text-[#a0a0a0]">
          <Chevron className="rotate-180" />
          <div className="mt-auto mb-1 h-[55px] w-3.5 bg-[#6a6a6a]" />
          <Chevron />
        </div>
      </div>
      <div className="flex h-[30px] shrink-0 items-center justify-end pr-[25px]">
        <IconButton label="Link layers" className="w-[34px]"><Link /></IconButton>
        <IconButton label="Layer style" className="w-[34px] text-[#8c8c8c]"><span className="text-base leading-none italic">fx</span></IconButton>
        <IconButton label="Layer mask" className="w-[34px] text-[#969696]"><Svg w={16} h={13}><path d="M0 0h16v13H0z" fill="currentColor" stroke="none" /><circle cx="8" cy="6.500" r="3.800" fill="#4a4a4a" stroke="none" /></Svg></IconButton>
        <IconButton label="Adjustment layer" className="relative w-[34px]"><HalfCircle /><span className="absolute right-1 -bottom-1 border-x-2 border-t-2 border-x-transparent border-t-white" /></IconButton>
        <IconButton label="Group" className="w-[34px]"><Svg w={16} h={13}><path d="M0 0h6l1.500 2H16v11H0z" fill="currentColor" stroke="none" /><path d="M0 3h16" stroke="#535353" strokeWidth=".8" /></Svg></IconButton>
        <IconButton label="New layer" className="w-[34px]"><Svg w={15} h={15}><path d="M1 1h13v13H1zM7.500 4.500v6M4.500 7.500h6" /></Svg></IconButton>
        <IconButton label="Delete layer" className="w-[34px]"><Svg w={14} h={16}><path d="M2 4v11h10V4M0 3.200h14M4.500 3V1h5v2M5 5v8M7 5v8M9 5v8" strokeWidth="1.400" /></Svg></IconButton>
      </div>
    </section>
  );
}

export default function App() {
  return (
    <div className="flex h-screen flex-col overflow-hidden bg-[#535353] font-['Noto_Sans',sans-serif] text-xs text-[#dcdcdc]">
      <MenuBar />
      <OptionsBar />
      <div className="flex min-h-0 flex-1">
        <Toolbar />
        <DocumentArea />
        <div className="flex w-[524px] shrink-0 flex-col border-r-2 border-l-[3px] border-[#3a3a3a]">
          <div className="flex h-[15px] shrink-0 items-center justify-between border-b border-[#383838] bg-[#424242] pr-1.5 pl-[31px]">
            <DoubleArrow left />
            <DoubleArrow />
          </div>
          <div className="flex min-h-0 flex-1">
            <Dock />
            <div className="flex min-w-0 flex-1 flex-col bg-[#535353]">
              <Properties />
              <Layers />
            </div>
          </div>
        </div>
      </div>
      <footer className="flex h-0.5 shrink-0 bg-[#1c1c1c]">
        <span className="ml-[60px] w-[430px] bg-[#f0f0f0]" />
        <span className="ml-[436px] w-[61px] bg-[#4a4a4a]" />
      </footer>
    </div>
  );
}
